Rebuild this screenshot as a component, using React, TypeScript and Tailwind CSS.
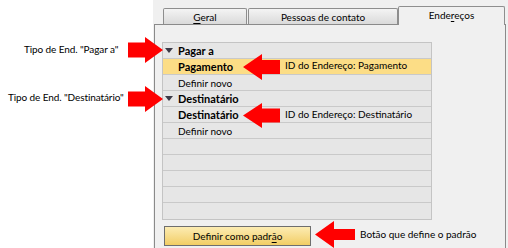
import React from "react";

type ArrowProps = {
  left: number;
  top: number;
  w: number;
  h: number;
  shaft: number;
  head: number;
  dir: "left" | "right";
};

function Arrow({ left, top, w, h, shaft, head, dir }: ArrowProps) {
  const cy = h / 2;
  const s1 = cy - shaft / 2;
  const s2 = cy + shaft / 2;
  const pts =
    dir === "right"
      ? `0,${s1} ${w - head},${s1} ${w - head},0 ${w},${cy} ${w - head},${h} ${w - head},${s2} 0,${s2}`
      : `${w},${s1} ${head},${s1} ${head},0 0,${cy} ${head},${h} ${head},${s2} ${w},${s2}`;
  return (
    <svg
      className="absolute"
      style={{ left, top }}
      width={w}
      height={h}
      viewBox={`0 0 ${w} ${h}`}
    >
      <polygon points={pts} fill="#ff0000" />
    </svg>
  );
}

function Tri() {
  return (
    <svg width="8" height="5" viewBox="0 0 8 5" className="mr-[5px] ml-[2px] shrink-0">
      <polygon points="0,0 8,0 4,5" fill="#3a3a48" />
    </svg>
  );
}

function Row({
  children,
  className = "",
  last = false,
}: {
  children?: React.ReactNode;
  className?: string;
  last?: boolean;
}) {
  return (
    <div
      className={`h-[16px] flex items-center ${last ? "" : "border-b border-[#c9c9c9]"} ${className}`}
    >
      {children}
    </div>
  );
}

export default function App() {
  return (
    <div className="relative w-[508px] h-[248px] flex bg-white overflow-hidden font-['Lato','Liberation_Sans',sans-serif] text-[10px] text-black leading-none">
      <div className="w-[153px] shrink-0 bg-white" />
      <div className="flex-1 bg-[#f0f0f0] flex flex-col pl-[1px] pr-[2px]">
        {/* tabs */}
        <div className="h-[24px] flex items-end pl-[9px] shrink-0">
          <div className="w-[84px] h-[16px] border border-b-0 border-[#8e8e8e] rounded-t-[2px] bg-gradient-to-b from-[#f4f4f4] to-[#dadada] flex items-center justify-center">
            <span>
              <span className="underline underline-offset-[2px]">G</span>eral
            </span>
          </div>
          <div className="w-[150px] ml-[1px] h-[16px] border border-b-0 border-[#8e8e8e] rounded-t-[2px] bg-gradient-to-b from-[#f4f4f4] to-[#dadada] flex items-center justify-center">
            Pessoas de contato
          </div>
          <div className="relative z-10 w-[107px] h-[19px] -mb-[1px] border border-b-0 border-[#8e8e8e] rounded-t-[2px] bg-[#f0f0f0] flex items-center justify-center pb-[2px]">
            <span>
              Ende<span className="underline underline-offset-[2px]">r</span>eços
            </span>
          </div>
        </div>
        {/* panel */}
        <div className="flex-1 border-l border-t border-r border-[#8a8a8a] bg-[#f0f0f0] pl-[7px] pt-[17px] flex flex-col items-start">
          <div className="w-[270px] border border-[#c4c4c4] bg-[#e6e6e6] flex flex-col">
            <Row>
              <Tri />
              <span className="font-bold text-[11px]">Pagar a</span>
            </Row>
            <Row className="bg-[#fcdd86] pl-[15px]">
              <span className="font-bold text-[11px]">Pagamento</span>
            </Row>
            <Row className="pl-[15px]">Definir novo</Row>
            <Row>
              <Tri />
              <span className="font-bold text-[11px]">Destinatário</span>
            </Row>
            <Row className="pl-[15px]">
              <span className="font-bold text-[11px]">Destinatário</span>
            </Row>
            <Row className="pl-[15px]">Definir novo</Row>
            <Row />
            <Row />
            <Row />
            <Row />
            <Row last />
          </div>
          <button className="mt-[6px] ml-[2px] w-[147px] h-[20px] border border-[#6e6e6e] bg-gradient-to-b from-[#fcecb2] to-[#f2cd62] flex items-center justify-center text-[10px] text-black">
            <span>
              Definir como padr<span className="underline underline-offset-[2px]">ã</span>o
            </span>
          </button>
        </div>
      </div>

      {/* annotations */}
      <span className="absolute left-[24px] top-[44px] whitespace-nowrap text-[10px] tracking-[-0.1px]">Tipo de End. "Pagar a"</span>
      <span className="absolute left-[8px] top-[92px] whitespace-nowrap text-[10px] tracking-[-0.1px]">Tipo de End. "Destinatário"</span>
      <span className="absolute left-[285px] top-[60px] whitespace-nowrap">ID do Endereço: Pagamento</span>
      <span className="absolute left-[285px] top-[109px] whitespace-nowrap">ID do Endereço: Destinatário</span>
      <span className="absolute left-[360px] top-[229px] whitespace-nowrap">Botão que define o padrão</span>

      <Arrow left={128} top={37} w={35} h={26} shaft={15} head={18} dir="right" />
      <Arrow left={128} top={86} w={35} h={26} shaft={15} head={18} dir="right" />
      <Arrow left={243} top={54} w={37} h={26} shaft={14} head={19} dir="left" />
      <Arrow left={243} top={103} w={37} h={25} shaft={14} head={19} dir="left" />
      <Arrow left={315} top={221} w={40} h={27} shaft={11} head={19} dir="left" />
    </div>
  );
}
